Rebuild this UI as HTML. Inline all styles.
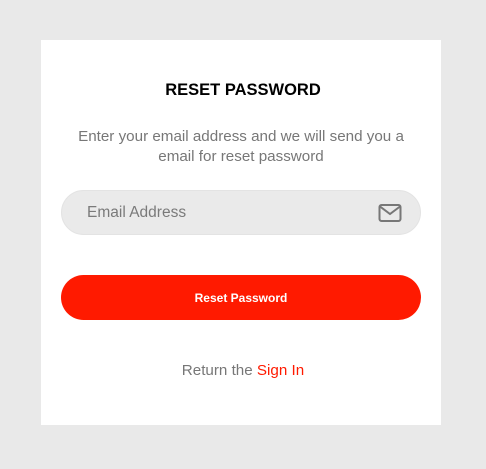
<!DOCTYPE html>
<html><head><style>
body{margin:0;width:486px;height:469px;background:#e9e9e9;font-family:"Liberation Sans",sans-serif;position:relative;overflow:hidden}
.card{position:absolute;left:41px;top:40px;width:400px;height:385px;background:#fff}
.t{position:absolute;top:81px;left:0;width:486px;text-align:center;font-weight:bold;font-size:16.5px;color:#000}
.p{position:absolute;top:127px;left:41px;width:400px;text-align:center;font-size:15.2px;line-height:20px;color:#777}
.in{position:absolute;left:61px;top:190px;width:360px;height:45px;border-radius:23px;background:#eaeaea;border:1px solid #e3e3e3;box-sizing:border-box}
.in span{position:absolute;left:25px;top:13px;font-size:15.5px;color:#7a7a7a}
.btn{position:absolute;left:61px;top:275px;width:360px;height:45px;border-radius:23px;background:#ff1a00;color:#fff;font-weight:bold;font-size:12px;text-align:center;line-height:46px}
.r{position:absolute;top:362px;left:0;width:486px;text-align:center;font-size:15.2px;color:#777}
.r b{font-weight:normal;color:#ff1a00}
</style></head><body>
<div class="card"></div>
<div class="t">RESET PASSWORD</div>
<div class="p">Enter your email address and we will send you a<br>email for reset password</div>
<div class="in"><span>Email Address</span>
<svg style="position:absolute;left:316px;top:12px" width="24" height="20" viewBox="0 0 24 20"><rect x="1.5" y="2" width="21" height="16" rx="2" fill="none" stroke="#777" stroke-width="2"/><path d="M2 3.5 L12 11 L22 3.5" fill="none" stroke="#777" stroke-width="2"/></svg></div>
<div class="btn">Reset Password</div>
<div class="r">Return the <b>Sign In</b></div>
</body></html>
